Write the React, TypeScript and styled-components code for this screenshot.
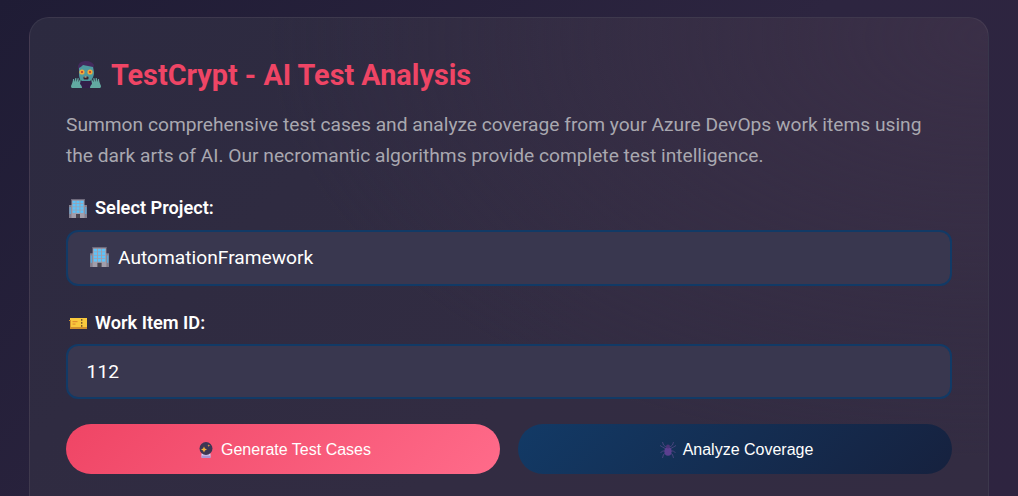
import React, { useState } from 'react'
import styled, { createGlobalStyle } from 'styled-components'

const GlobalStyle = createGlobalStyle`
  html, body {
    margin: 0;
    padding: 0;
    height: 496px;
    overflow: hidden;
    background: linear-gradient(135deg, #1f1c35 0%, #2d2540 55%, #2e2440 100%);
    font-family: Roboto, "Noto Sans", sans-serif;
  }
  * { box-sizing: border-box; }
`

const Page = styled.div`
  display: flex;
  justify-content: center;
  padding-top: 17px;
`

const Card = styled.section`
  width: 960px;
  height: 479px;
  overflow: hidden;
  padding: 35px 36px 0;
  border: 1px solid rgba(255, 255, 255, 0.06);
  border-bottom: 0;
  border-radius: 20px 20px 0 0;
  background:
    radial-gradient(ellipse 720px 420px at 100% 4%, #3a2f47 0%, rgba(58, 47, 71, 0) 100%),
    linear-gradient(135deg, #2c2a40 0%, #322c42 60%, #332c42 100%);
`

const Title = styled.h2`
  display: flex;
  align-items: center;
  gap: 10px;
  margin: 0 0 12px;
  padding-left: 5px;
  font-size: 28.8px;
  line-height: 44px;
  font-weight: 700;
  color: #ef4565;
`

const Intro = styled.p`
  margin: 0 0 25px;
  font-size: 19.2px;
  line-height: 31px;
  color: #a9a8b0;
`

const Field = styled.div`
  margin-bottom: 25px;
`

const Label = styled.label<{ $gap: number }>`
  display: flex;
  align-items: center;
  gap: 8px;
  margin: 0 0 ${(p) => p.$gap}px;
  padding-left: 3px;
  font-size: 18.2px;
  line-height: 24px;
  font-weight: 600;
  color: #fffffe;
`

const SelectBox = styled.div`
  display: flex;
  align-items: center;
  gap: 9px;
  height: 56px;
  padding: 0 22px 2px;
  border: 2px solid #123a66;
  border-radius: 12px;
  background: #39374f;
  color: #fffffe;
  font-size: 19.2px;
`

const Input = styled.input`
  display: block;
  width: 100%;
  height: 55px;
  padding: 0 18.6px;
  border: 2px solid #123a66;
  border-radius: 12px;
  background: #39374f;
  color: #fffffe;
  font-family: inherit;
  font-size: 19.2px;
  outline: none;
`

const Actions = styled.div`
  display: grid;
  grid-template-columns: 1fr 1fr;
  gap: 18px;
`

const Button = styled.button<{ $tone: 'primary' | 'secondary' }>`
  display: flex;
  align-items: center;
  justify-content: center;
  gap: 4px;
  height: 50px;
  padding: 2px 0 0;
  border: 0;
  border-radius: 25px;
  font-family: "Liberation Sans", Arial, sans-serif;
  font-size: 16px;
  color: #fffffe;
  background: ${(p) =>
    p.$tone === 'primary'
      ? 'linear-gradient(135deg, #ef4565 0%, #ff6b8a 100%)'
      : 'linear-gradient(135deg, #123a66 0%, #16213e 100%)'};
`

const Slot = styled.span`
  display: flex;
  justify-content: center;
  width: 22px;
`

const ZombieIcon = () => (
  <svg width="30" height="28" viewBox="0 0 30 28" aria-hidden="true">
    <path d="M7 6C7 2 11 0 15 0c4 0 7 2 8 4l-1 6H8z" fill="#432a5c" />
    <path d="M8 7c2-1 3-2 4-3 3 1 7 1 10 2l1 5c0 6-3 10-8 10s-7-3-7-8z" fill="#4e9aa0" />
    <circle cx="11" cy="11" r="2.6" fill="#f0a83a" />
    <circle cx="19" cy="11" r="2.6" fill="#f0a83a" />
    <circle cx="11" cy="11" r="1" fill="#b8322a" />
    <circle cx="19" cy="11" r="1" fill="#b8322a" />
    <rect x="12.5" y="15.5" width="5" height="3" rx="1" fill="#3a2430" />
    <rect x="13.5" y="15.5" width="2" height="1" fill="#e8d6a0" />
    <path d="M9 20h12l1 7H8z" fill="#33204a" />
    <path
      d="M0 25c1-2 2-5 2-7l1 0 .5 3 .8-4h1l.2 4 1.2-4 1 .2-.3 4 1.6-3 .8.4L9 23c1 1 2 2 2 4H2c-1 0-2 0-2-2z"
      fill="#62aaa2"
    />
    <path
      d="M30 25c-1-2-2-5-2-7l-1 0-.5 3-.8-4h-1l-.2 4-1.2-4-1 .2.3 4-1.6-3-.8.4L21 23c-1 1-2 2-2 4h9c1 0 2 0 2-2z"
      fill="#62aaa2"
    />
  </svg>
)

const BuildingIcon = ({ size }: { size: number }) => (
  <svg width={size} height={size + 1} viewBox="0 0 18 19" aria-hidden="true">
    <rect x="0" y="6" width="18" height="13" fill="#85808f" />
    <rect x="2.5" y="0" width="13" height="19" fill="#a19eab" />
    <rect x="2.5" y="0" width="13" height="1.2" fill="#6f6a7c" />
    {[1.8, 5, 8.2, 11.4].map((y) =>
      [3.6, 7.5, 11.4].map((x) => (
        <rect key={`${x}-${y}`} x={x} y={y} width="3" height="2.5" fill="#5cc4fb" />
      )),
    )}
    <rect x="0.6" y="8" width="1.3" height="7" fill="#58a8dc" />
    <rect x="16.1" y="8" width="1.3" height="7" fill="#58a8dc" />
    <rect x="7" y="15" width="4" height="4" fill="#4a4652" />
  </svg>
)

const TicketIcon = () => (
  <svg width="18" height="11" viewBox="0 0 18 11" aria-hidden="true">
    <path d="M1 0h17v9H1z" fill="#f9c93d" />
    <path d="M0 3h1v8h17V9H2V2H0z" fill="#d2912d" />
    <rect x="3.5" y="3" width="5" height="1.2" fill="#e2902f" />
    <rect x="3.5" y="5.5" width="3" height="1.2" fill="#e2902f" />
    <rect x="12" y="1" width="1.4" height="1.8" fill="#7a5a2a" />
    <rect x="12" y="4" width="1.4" height="1.8" fill="#7a5a2a" />
    <rect x="12" y="7" width="1.4" height="1.8" fill="#7a5a2a" />
  </svg>
)

const BallIcon = () => (
  <svg width="14" height="16" viewBox="0 0 14 16" aria-hidden="true">
    <rect x="2.5" y="11" width="9" height="5" rx="1" fill="#d9cdf0" />
    <rect x="2.5" y="13.5" width="9" height="2.5" rx="1" fill="#a996d4" />
    <circle cx="7" cy="6.5" r="6.5" fill="#3d3754" />
    <path d="M5 4.5l.9 2.1 2.1.9-2.1.9L5 10.5l-.9-2.1L2 7.5l2.1-.9z" fill="#f4b13c" />
    <path d="M9.8 2.2l.4 1 1 .4-1 .4-.4 1-.4-1-1-.4 1-.4z" fill="#e89a4a" />
  </svg>
)

const SpiderIcon = () => (
  <svg width="16" height="16" viewBox="0 0 16 16" aria-hidden="true">
    <g fill="none" stroke="#5d4c8c" strokeWidth="0.7">
      <path d="M6.5 5.5L3.5 3 2.5 0" />
      <path d="M9.5 5.5l3-2.5 1-3" />
      <path d="M6 7L2.5 5 0 3.5" />
      <path d="M10 7l3.5-2 2.5-1.5" />
      <path d="M6 9L2.5 9 .5 11" />
      <path d="M10 9l3.5 0 2 2" />
      <path d="M6.5 10.5L3.5 12.5 2.5 16" />
      <path d="M9.5 10.5l3 2 1 3.5" />
    </g>
    <ellipse cx="8" cy="9.5" rx="3.6" ry="4.2" fill="#5b3f8f" />
    <circle cx="8" cy="4.6" r="2" fill="#4b3478" />
  </svg>
)

export default function App() {
  const [workItem, setWorkItem] = useState('112')

  return (
    <>
      <GlobalStyle />
      <Page>
        <Card>
          <Title>
            <ZombieIcon />
            TestCrypt - AI Test Analysis
          </Title>
          <Intro>
            Summon comprehensive test cases and analyze coverage from your Azure DevOps work items
            using the dark arts of AI. Our necromantic algorithms provide complete test
            intelligence.
          </Intro>
          <Field>
            <Label $gap={10}>
              <BuildingIcon size={18} />
              Select Project:
            </Label>
            <SelectBox>
              <BuildingIcon size={19} />
              AutomationFramework
            </SelectBox>
          </Field>
          <Field>
            <Label $gap={9}>
              <TicketIcon />
              Work Item ID:
            </Label>
            <Input value={workItem} onChange={(e) => setWorkItem(e.target.value)} />
          </Field>
          <Actions>
            <Button $tone="primary">
              <Slot>
                <BallIcon />
              </Slot>
              Generate Test Cases
            </Button>
            <Button $tone="secondary">
              <Slot>
                <SpiderIcon />
              </Slot>
              Analyze Coverage
            </Button>
          </Actions>
        </Card>
      </Page>
    </>
  )
}
